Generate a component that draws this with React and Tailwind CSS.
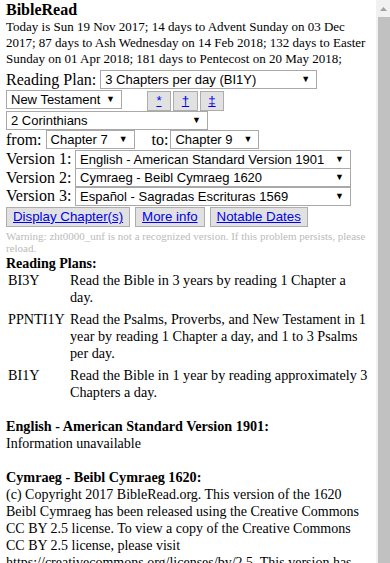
import React from "react";

const Select = ({ value, width }) => (
  <div
    className={`flex items-center justify-between h-[19px] border border-[#a9a9a9] bg-white pl-[4px] pr-[6px] font-['Liberation_Sans',Arial,sans-serif] text-[13px] leading-none text-black ${width}`}
  >
    <span className="whitespace-nowrap">{value}</span>
    <span className="text-[9px] ml-[4px]">▼</span>
  </div>
);

const Button = ({ children, className = "" }) => (
  <button
    className={`h-[20px] whitespace-nowrap border border-[#adadad] bg-[#e1e1e1] px-[6px] font-['Liberation_Sans',Arial,sans-serif] text-[13.3px] leading-none text-[#0000ee] underline ${className}`}
  >
    {children}
  </button>
);

const plans = [
  { code: "BI3Y", text: "Read the Bible in 3 years by reading 1 Chapter a day." },
  {
    code: "PPNTI1Y",
    text: "Read the Psalms, Proverbs, and New Testament in 1 year by reading 1 Chapter a day, and 1 to 3 Psalms per day.",
  },
  { code: "BI1Y", text: "Read the Bible in 1 year by reading approximately 3 Chapters a day." },
];

export default function App() {
  return (
    <div className="flex h-[563px] w-[390px] overflow-hidden bg-white">
      {/* page content */}
      <div className="flex-1 pl-[6px] pr-[4px] pt-[1px] font-['Liberation_Serif','Times_New_Roman',serif] text-[14px] leading-[17px] text-black">
        <h1 className="text-[16px] font-bold leading-[18px]">BibleRead</h1>
        <p className="text-[13px] leading-[16px]">
          Today is Sun 19 Nov 2017; 14 days to Advent Sunday on 03 Dec 2017; 87 days to Ash Wednesday on 14 Feb
          2018; 132 days to Easter Sunday on 01 Apr 2018; 181 days to Pentecost on 20 May 2018;
        </p>

        <div className="mt-[3px] flex items-center gap-[4px] text-[16px] leading-[18px]">
          <span>Reading Plan:</span>
          <Select value="3 Chapters per day (BI1Y)" width="w-[217px]" />
        </div>

        <div className="flex items-start h-[22px]">
          <Select value="New Testament" width="w-[116px] mt-[1px]" />
          <div className="ml-[25px] mt-[2px] flex gap-[2px]">
            <Button className="w-[24px] px-0 text-[12px]">*</Button>
            <Button className="w-[25px] px-0">†</Button>
            <Button className="w-[24px] px-0">‡</Button>
          </div>
        </div>

        <div>
          <Select value="2 Corinthians" width="w-[202px]" />
        </div>

        <div className="flex items-center text-[16px] leading-[18px]">
          <span className="mr-[4px]">from:</span>
          <Select value="Chapter 7" width="w-[89px]" />
          <span className="ml-[17px] mr-[2px]">to:</span>
          <Select value="Chapter 9" width="w-[89px]" />
        </div>

        <div className="mt-[1px] flex flex-col text-[16px] leading-[18px]">
          {[
            ["Version 1:", "English - American Standard Version 1901"],
            ["Version 2:", "Cymraeg - Beibl Cymraeg 1620"],
            ["Version 3:", "Español - Sagradas Escrituras 1569"],
          ].map(([label, value]) => (
            <div key={label} className="flex items-center gap-[2px] h-[18.5px]">
              <span className="w-[67px] whitespace-nowrap">{label}</span>
              <Select value={value} width="w-[276px]" />
            </div>
          ))}
        </div>

        <div className="flex gap-[5px] mt-[1px]">
          <Button>Display Chapter(s)</Button>
          <Button>More info</Button>
          <Button>Notable Dates</Button>
        </div>

        <p className="mt-[3px] text-[11px] leading-[12px] text-[#bbbbbb]">
          Warning: zht0000_unf is not a recognized version. If this problem persists, please reload.
        </p>

        <h2 className="mt-[1px] font-bold text-[14px] leading-[17px]">Reading Plans:</h2>
        <div className="flex flex-col gap-[5px] pl-[2px] text-[14.2px]">
          {plans.map((p) => (
            <div key={p.code} className="flex">
              <span className="w-[62px] shrink-0">{p.code}</span>
              <span>{p.text}</span>
            </div>
          ))}
        </div>

        <h3 className="mt-[17px] font-bold text-[14.2px]">English - American Standard Version 1901:</h3>
        <p>Information unavailable</p>

        <h3 className="mt-[17px] font-bold text-[14.2px]">Cymraeg - Beibl Cymraeg 1620:</h3>
        <p>
          (c) Copyright 2017 BibleRead.org. This version of the 1620 Beibl Cymraeg has been released using the
          Creative Commons CC BY 2.5 license. To view a copy of the Creative Commons CC BY 2.5 license, please visit
          https://creativecommons.org/licenses/by/2.5. This version has been based on...
        </p>
      </div>

      {/* scrollbar */}
      <div className="flex w-[14px] shrink-0 flex-col bg-[#f1f1f1]">
        <div className="flex h-[17px] items-center justify-center">
          <svg width="7" height="4" viewBox="0 0 7 4">
            <path d="M0 4 L3.5 0 L7 4 Z" fill="#a3a3a3" />
          </svg>
        </div>
        <div className="ml-[2px] flex-1 bg-[#c1c1c1]" />
      </div>
    </div>
  );
}
